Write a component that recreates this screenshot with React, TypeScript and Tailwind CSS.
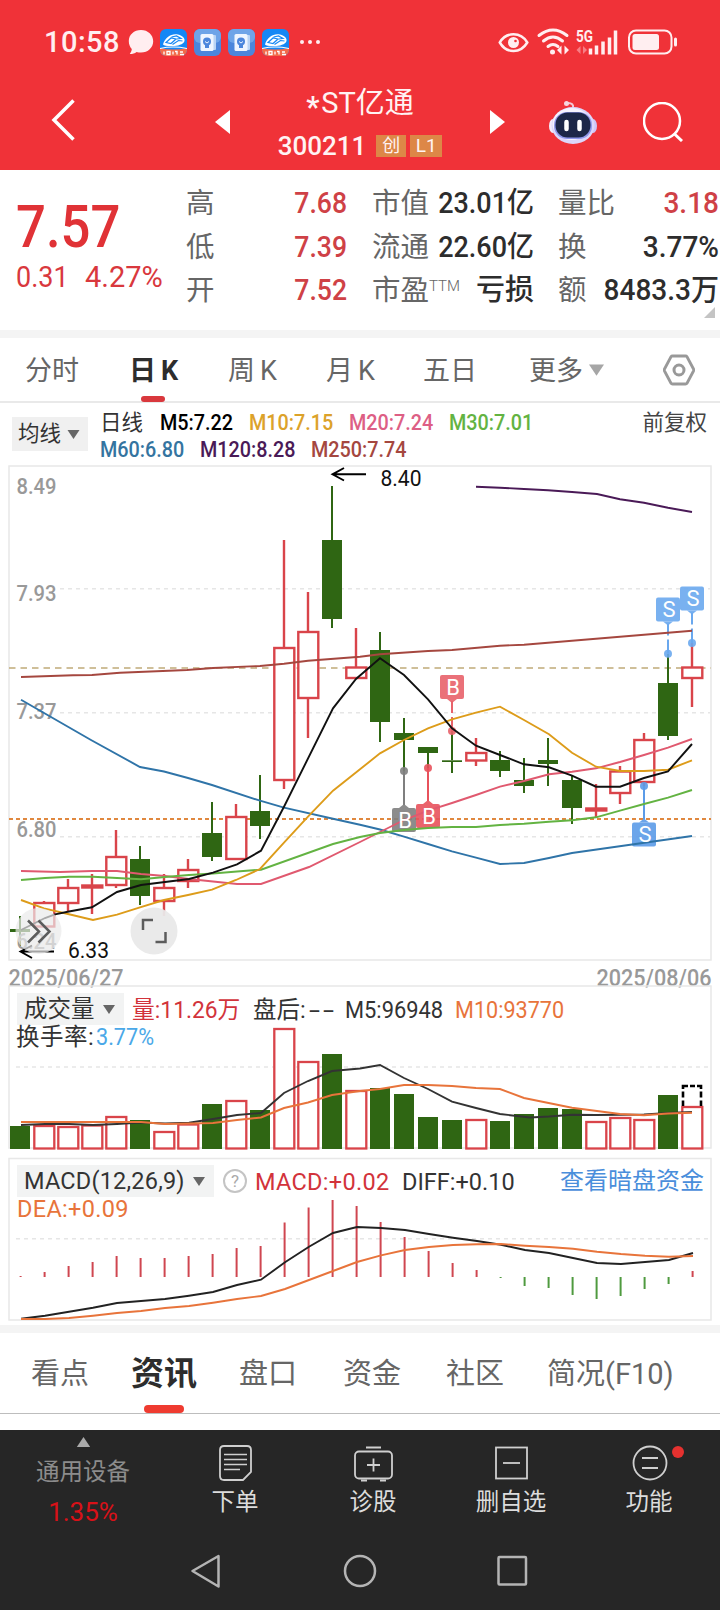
import React from 'react'
import clsx from 'clsx'

const RED = '#d9444a'
const GREEN = '#2f6613'

// high, body top, body bottom, low
type Candle = { up: boolean; y: [number, number, number, number]; vol: number }

const CANDLES: Candle[] = [
  { up: false, y: [916, 929, 932, 946], vol: 1126 },
  { up: true, y: [901, 903, 926.5, 926.5], vol: 1126 },
  { up: true, y: [879, 888, 903, 911], vol: 1127 },
  { up: true, y: [874, 885.5, 887.5, 914], vol: 1125.5 },
  { up: true, y: [830, 857, 885, 888], vol: 1117 },
  { up: false, y: [846, 859, 896, 905], vol: 1120 },
  { up: true, y: [874, 888, 901, 916], vol: 1132 },
  { up: true, y: [859, 870, 881, 888], vol: 1124.5 },
  { up: false, y: [802, 833, 857, 861], vol: 1104 },
  { up: true, y: [804, 817, 859, 859], vol: 1101 },
  { up: false, y: [775, 811, 826, 839], vol: 1110 },
  { up: true, y: [540, 648, 780, 789], vol: 1029 },
  { up: true, y: [592, 632, 698, 738], vol: 1062 },
  { up: false, y: [486, 540, 619, 628], vol: 1054 },
  { up: true, y: [628, 667.5, 678, 678], vol: 1091 },
  { up: false, y: [632, 650, 722, 742], vol: 1088 },
  { up: false, y: [718, 733, 740, 771], vol: 1094 },
  { up: false, y: [747, 747, 753, 768], vol: 1117 },
  { up: false, y: [731, 760.3, 762, 773], vol: 1120 },
  { up: true, y: [738, 753, 760.5, 766], vol: 1120 },
  { up: false, y: [751, 760, 771, 777], vol: 1121 },
  { up: false, y: [758, 780, 786, 793], vol: 1114 },
  { up: false, y: [738, 760, 764, 786], vol: 1108 },
  { up: false, y: [776, 780, 808, 824], vol: 1109 },
  { up: true, y: [784, 808.5, 810.5, 817], vol: 1122 },
  { up: true, y: [766, 771.5, 793, 804], vol: 1118 },
  { up: true, y: [733, 740, 782, 786], vol: 1120 },
  { up: false, y: [654, 683, 736, 740], vol: 1095 },
  { up: true, y: [643, 667.5, 678, 707], vol: 1107 },
]

const MA_LINES: { color: string; points: string }[] = [
  { color: '#a5473f', points: '21,677 73,675.3 92,675 120,672.8 187,670 213,668 260,666 284,663.7 308,660.7 360,656.7 380,654.3 428,651 452,650 500,645.7 524,644.7 692,630.7' },
  { color: '#4a1a57', points: '476,486.7 500,487.7 524,489 548,490.3 572,492 597,494 620,499.3 644,502.7 668,507.7 692,512' },
  { color: '#2f74a8', points: '21,699.7 91,740 140,767 164,771.5 188,778 212,785 260,800.7 284,807.7 333,818.7 360,824.7 380,829.5 404,836.7 428,844 452,851.3 476,857.7 500,864 524,863 549,858 572,853 692,836' },
  { color: '#e0596f', points: '21,871 60,872 92,871 117,871 141,874 165,876 189,879 213,881.5 237,884 261,884 309,867 360,842 380,832 404,820 428,810.7 452,803 476,795 500,786.7 524,781 549,774.3 572,771.7 596,768.3 620,762 644,755 668,747.7 692,739' },
  { color: '#63b342', points: '21,880 45,878 69,876.7 93,876.7 117,878 141,879.3 165,877 189,875 213,873.5 237,871.5 261,869.7 333,844 360,837 380,833 404,830 428,828 452,827 476,827 500,825 524,823.7 549,821.7 572,820.3 596,817.3 620,810.7 644,804 668,797.7 692,790' },
  { color: '#dd9c1a', points: '21,900 44,908.3 68,914 93,920 117,914.7 140,907.3 164,900 188,895 212,889.7 236,880 260,869 284,842.7 308,816.7 333,790.7 360,769.3 380,753.3 404,740 428,728.3 452,719.3 476,712.7 500,706.7 524,720 549,734.3 572,752.7 596,766.7 620,771 644,771 668,769.7 692,760.3' },
  { color: '#111111', points: '21,930 45,918 55,914.3 69,911.5 92,907.3 117,892 141,885 165,882 189,879 213,872.7 237,864.3 261,850.7 284,806.7 333,708.3 356,679 380,658.3 404,675 428,699.3 452,728.3 476,745.7 500,755 524,764.3 549,767.3 572,775.7 596,786.7 620,786.7 644,778 668,771.3 692,744' },
]

const MACD_BARS = [-1, -5, -11, -15, -21, -19, -19, -21, -23, -29, -31, -54.5, -69.5, -77, -71, -55, -40, -26, -14, -7, 1, 9, 11, 18, 22, 19, 12, 7, -6]
const DIFF = [1318.7, 1315.7, 1311.7, 1307.7, 1303, 1301, 1299, 1295.7, 1292, 1285, 1279.7, 1262.3, 1246.7, 1233, 1227, 1228, 1230, 1234, 1237.7, 1241, 1244.7, 1250, 1253, 1258, 1263, 1264, 1262, 1260, 1253]
const DEA = [1319, 1319, 1318, 1315.7, 1313, 1311, 1308, 1306, 1302.7, 1299, 1296, 1289, 1280, 1271, 1262, 1255.3, 1250, 1247, 1245, 1244.3, 1244, 1245.7, 1247, 1248.7, 1251.7, 1254, 1255.7, 1256.7, 1256]

const cx = (i: number) => 20 + i * 24
const toPoints = (ys: number[]) => ys.map((y, i) => `${cx(i) + 1},${y}`).join(' ')

const AXIS = [
  { label: '8.49', y: 494 },
  { label: '7.93', y: 600.7 },
  { label: '7.37', y: 718.7 },
  { label: '6.80', y: 836.7 },
  { label: '6.24', y: 948.7 },
]

// dir = 1: the flag hangs below the dot, dir = -1: it stands above
const MARKERS = [
  { x: 404, dot: 771, box: 808, dir: 1, text: 'B', fill: '#7f7f7f' },
  { x: 428, dot: 768, box: 804, dir: 1, text: 'B', fill: '#e8525c' },
  { x: 644, dot: 786, box: 822.5, dir: 1, text: 'S', fill: '#5b9be8' },
  { x: 452, dot: 731, box: 675, dir: -1, text: 'B', fill: '#e8626a' },
  { x: 668, dot: 653.7, box: 597.5, dir: -1, text: 'S', fill: '#6aa8ee' },
  { x: 692, dot: 643, box: 586.5, dir: -1, text: 'S', fill: '#6aa8ee' },
]

const Caret: React.FC<{ className?: string }> = ({ className }) => (
  <svg viewBox="0 0 12 9" className={className}>
    <path d="M0 0h12L6 9z" fill="currentColor" />
  </svg>
)

const TrainIcon = () => (
  <svg viewBox="0 0 27 27" className="size-[27px]">
    <rect width="27" height="27" rx="6" fill="#1587f5" />
    <path d="M0 19q13 3 27 0v2a6 6 0 0 1-6 6H6a6 6 0 0 1-6-6z" fill="#f26a4a" />
    <path d="M0 19.500q13-3 27 0" stroke="#fff" strokeWidth="1.2" fill="none" />
    <path d="M3 15.500C5 8 12 4 18 5.500c5 1.200 7 4 6.500 6.500-1 4-9 5.500-14 5-3.500 0-6.500 0-7.500-1.500z" fill="#fff" />
    <path d="M6 13.500l5-4.500 5 1-5 4.500zM11.500 8l5-1 4.500 2.500-4 .5M12.500 15.500l6-4 4 .5" stroke="#1587f5" strokeWidth="1.200" fill="none" />
    <path d="M4 22.500v3M7 22.500h3v3H7zM13 22.500v3M15 22.500h2v3M20 23h3M20 25.500h4" stroke="#fff" strokeWidth="1.300" fill="none" />
  </svg>
)

const CardIcon = () => (
  <svg viewBox="0 0 27 27" className="size-[27px]">
    <rect width="27" height="27" rx="6" fill="#4b86dc" />
    <rect width="27" height="14" rx="6" fill="#6ea4e8" />
    <rect x="17" y="6" width="5" height="15" rx="1" fill="#b9d4f5" />
    <rect x="6.500" y="5" width="13" height="17" rx="1.500" fill="#eef5ff" />
    <circle cx="13" cy="12.500" r="4" fill="#4b86dc" />
    <path d="M11 15.500h4v3.500h-4z" fill="#4b86dc" />
    <path d="M11 12.500l2 1.500 2-1.500" stroke="#eef5ff" fill="none" />
  </svg>
)

const StatusBar = () => (
  <div className="flex h-[74px] items-center pt-[10px] pl-[44px] text-[#ffeef0]">
    <span className="w-[84px] text-[29px] leading-7 font-medium tracking-[0.500px]">10:58</span>
    <svg viewBox="0 0 26 26" className="mr-[6px] size-[26px]">
      <path d="M13 1C6 1 .8 5.700.8 12c0 3.600 1.200 6 3 8-.2 2-1 3.500-2 5 3 0 5-.6 6.700-2 1.500.4 3 .5 4.500.5 7 0 12.200-5 12.200-11.300S20 1 13 1z" fill="currentColor" />
    </svg>
    <div className="flex gap-[7px]">
      <TrainIcon />
      <CardIcon />
      <CardIcon />
      <TrainIcon />
    </div>
    <div className="ml-[11px] flex w-[199px] gap-1">
      <i className="size-1 rounded-full bg-current" />
      <i className="size-1 rounded-full bg-current" />
      <i className="size-1 rounded-full bg-current" />
    </div>
    <svg viewBox="0 0 180 28" className="-ml-px h-[28px] w-[180px] overflow-visible" fill="none" stroke="currentColor">
      <path d="M1.800 14.500C5 9 10 6.300 15.500 6.300S26 9 29.300 14.500C26 20 21 23 15.500 23S5 20 1.800 14.500z" strokeWidth="2.500" />
      <circle cx="15.500" cy="14.500" r="5.500" fill="currentColor" stroke="none" />
      <circle cx="17.500" cy="13" r="1.300" fill="#f03238" stroke="none" />
      <g strokeWidth="3" strokeLinecap="round">
        <path d="M41 7.500q14-11 28 0" />
        <path d="M45.500 13q9.500-8 19 0" />
        <path d="M50 18.500q5-4 10 0" />
      </g>
      <circle cx="54.500" cy="24" r="2.500" fill="currentColor" stroke="none" />
      <path d="M63.500 17.500v9l-4.500-4.500zM66.500 17.500v9l4.500-4.500z" fill="currentColor" stroke="none" />
      <text x="78" y="13.500" fontSize="16" fontWeight="700" fill="currentColor" stroke="none" textLength="17" lengthAdjust="spacingAndGlyphs">5G</text>
      <path d="M82.500 18v8l-4-4zM85 18v8l4-4z" fill="#f77f85" stroke="none" />
      <path d="M92.500 26.500v-6M98.500 26.500v-9M105 26.500v-13M111.500 26.500v-17M117.500 26.500v-24" strokeWidth="3.500" strokeLinecap="butt" />
      <rect x="131" y="2.500" width="42.500" height="23" rx="7" strokeWidth="2" />
      <rect x="134.500" y="6" width="26.500" height="16" rx="2.500" fill="currentColor" stroke="none" />
      <path d="M177.500 11v6" strokeWidth="3" strokeLinecap="round" />
    </svg>
  </div>
)

const Robot = () => (
  <svg viewBox="0 0 48 44" className="ml-[44px] h-[44px] w-[48px]">
    <path d="M24 8q1-5-5-5" stroke="#f3c8d4" strokeWidth="2" fill="none" />
    <circle cx="17.500" cy="3.500" r="2.500" fill="#f6d5de" />
    <ellipse cx="4" cy="26" rx="4" ry="7" fill="#f4ecfb" />
    <ellipse cx="44" cy="26" rx="4" ry="7" fill="#cfc4f6" />
    <ellipse cx="24" cy="25.500" rx="21.500" ry="18.500" fill="#dcd6fa" />
    <ellipse cx="22.500" cy="24" rx="19" ry="16" fill="#f7f3fd" />
    <rect x="5" y="12" width="38" height="27" rx="13" fill="#8f97ea" />
    <rect x="6.500" y="12.500" width="35" height="25" rx="12" fill="#1d2747" />
    <path d="M17.500 22v7M30.500 22v7" stroke="#fff" strokeWidth="4.500" strokeLinecap="round" />
  </svg>
)

const NavBar = () => (
  <div className="flex h-[96px] items-center pl-[51px] text-white">
    <svg viewBox="0 0 24 42" className="mb-1 h-[42px] w-[24px]" fill="none" stroke="currentColor" strokeWidth="3.500">
      <path d="M22.500 1.500L3 21l19.500 19.500" />
    </svg>
    <svg viewBox="0 0 15 24" className="ml-[140px] h-[24px] w-[15px]"><path d="M15 0v24L0 12z" fill="currentColor" /></svg>
    <div className="flex w-[260px] flex-col items-center pt-[6px]">
      <div className="-mt-px mb-px text-[29px] leading-[42px] text-[#fff3f3]">
        <span className="mr-0.5 inline-block translate-y-[4px] font-bold">*</span>ST亿通
      </div>
      <div className="flex items-center gap-1 leading-[42px] text-[#fff3f3]">
        <span className="mr-[6px] text-[26px] font-medium">300211</span>
        <span className="flex h-[22px] w-[30px] items-center justify-center bg-[#dd8747] text-[18px]">创</span>
        <span className="flex h-[22px] w-[32px] items-center justify-center bg-[#dd8747] text-[19px]">L1</span>
      </div>
    </div>
    <svg viewBox="0 0 15 24" className="h-[24px] w-[15px]"><path d="M0 0v24l15-12z" fill="currentColor" /></svg>
    <Robot />
    <svg viewBox="0 0 40 40" className="ml-[46px] size-[40px]" fill="none" stroke="currentColor" strokeWidth="2.500">
      <circle cx="19" cy="19" r="18" />
      <path d="M31 31.500l8 7.500" strokeWidth="3" />
    </svg>
  </div>
)

const QUOTE_ROWS = [
  { a: ['高', '7.68'], b: ['市值', '23.01亿'], c: ['量比', '3.18'], red: true },
  { a: ['低', '7.39'], b: ['流通', '22.60亿'], c: ['换', '3.77%'] },
  { a: ['开', '7.52'], b: ['市盈', '亏损'], c: ['额', '8483.3万'], ttm: true },
]

const Quote = () => (
  <div className="relative flex h-[168px] border-b-8 border-[#f4f4f4] text-[28.500px]">
    <div className="w-[186px] pt-[24px] pl-[16px] text-[#d9383d]">
      <div className="w-[113px] origin-left scale-x-90 text-[58.500px] leading-[66px] font-medium text-[#e03236]">7.57</div>
      <div className="flex text-[29px] leading-[35px]">
        <span className="w-[69px] origin-left scale-x-[0.93]">0.31</span>
        <span className="origin-left">4.27%</span>
      </div>
    </div>
    <div className="flex-1 pt-[12px]">
      {QUOTE_ROWS.map((row) => (
        <div key={row.a[0]} className="flex h-[43.500px] items-baseline leading-[43px] text-[#666]">
          <span className="w-[60px]">{row.a[0]}</span>
          <span className="w-[101px] origin-right scale-x-90 text-right text-[29.500px] font-medium text-[#cf4146]">{row.a[1]}</span>
          <span className="ml-[25px]">{row.b[0]}</span>
          <span className="w-0 -translate-y-[9px] text-[15px] font-light">{row.ttm && 'TTM'}</span>
          <span className={clsx('w-[105px] origin-right text-right text-[29px] font-medium text-[#2d2d2d]', !row.ttm && 'scale-x-[0.93]')}>{row.b[1]}</span>
          <span className="ml-[24px] w-[58px]">{row.c[0]}</span>
          <span className={clsx('flex w-[103px] origin-right scale-x-[0.95] justify-end text-[29.500px] font-medium whitespace-nowrap', row.red ? 'text-[#cf4146]' : 'text-[#2d2d2d]')}>{row.c[1]}</span>
        </div>
      ))}
    </div>
    <svg viewBox="0 0 11 11" className="absolute right-[5px] bottom-[12px] size-[11px]"><path d="M11 0v11H0z" fill="#c4c4c4" /></svg>
  </div>
)

const PERIODS = [
  { label: '分时', cls: 'ml-[25px] w-[104px]' },
  { label: '日K', cls: 'w-[99px] font-bold text-[#2d2d2d] tracking-[5px]', active: true },
  { label: '周K', cls: 'w-[98px] tracking-[5px]' },
  { label: '月K', cls: 'w-[97px] tracking-[5px]' },
  { label: '五日', cls: 'w-[106px]' },
  { label: '更多', cls: 'w-[60px]' },
]

const PeriodTabs = () => (
  <div className="flex h-[65px] items-center border-b-2 border-[#e9e9e9] text-[27px] text-[#666]">
    {PERIODS.map((p) => (
      <div key={p.label} className={clsx('relative h-full leading-[67px]', p.cls)}>
        {p.label}
        {p.active && <i className="absolute -bottom-px left-[12px] h-[6px] w-[24px] rounded-full bg-[#d9383d]" />}
      </div>
    ))}
    <Caret className="h-[12px] w-[15px] text-[#a6a6a6]" />
    <svg viewBox="0 0 32 32" className="ml-[59px] size-[32px]" fill="none" stroke="#999" strokeWidth="2.800">
      <path d="M9.500 2h13q1 0 1.500.8L30.500 15q.5 1 0 2L24 29.200q-.5.8-1.500.8h-13q-1 0-1.500-.8L1.500 17q-.5-1 0-2L8 2.800Q8.500 2 9.500 2z" />
      <circle cx="16" cy="16" r="5" strokeWidth="3" />
    </svg>
  </div>
)

const MaLegend = () => (
  <div className="flex h-[60px] text-[22px]">
    <div className="mt-[14px] ml-[12px] flex h-[34px] w-[76px] items-center bg-[#f0f0f0] pl-[6px] text-[21.500px] text-[#333]">
      均线
      <Caret className="ml-[6px] h-[9px] w-[13px] text-[#666]" />
    </div>
    <div className="ml-[12px] flex-1 pt-[6px] leading-[27px]">
      <div className="flex">
        <span className="w-[60px] text-[21.500px] text-[#333]">日线</span>
        <span className="w-[89px] origin-left scale-x-90 font-medium text-black">M5:7.22</span>
        <span className="w-[100px] origin-left scale-x-90 font-medium text-[#dca22a]">M10:7.15</span>
        <span className="w-[100px] origin-left scale-x-90 font-medium text-[#dd5f85]">M20:7.24</span>
        <span className="origin-left scale-x-90 font-medium text-[#63b342]">M30:7.01</span>
      </div>
      <div className="flex">
        <span className="w-[100px] origin-left scale-x-90 font-medium text-[#3474a0]">M60:6.80</span>
        <span className="w-[111px] origin-left scale-x-90 font-medium text-[#4a1a57]">M120:8.28</span>
        <span className="origin-left scale-x-90 font-medium text-[#a5473f]">M250:7.74</span>
      </div>
    </div>
    <span className="mr-[13px] pt-[6px] text-[21.500px] leading-[28px] text-[#444]">前复权</span>
  </div>
)

const KChart = () => (
  <svg viewBox="0 463 720 523" className="block h-[523px] w-[720px] overflow-visible">
    <path d="M9 466H711V960H9z" fill="none" stroke="#e8e8e8" strokeWidth="1.500" />
    <path d="M60 588.700H710M60 712.700H710M60 836.700H710" stroke="#e6e6e6" strokeWidth="1.500" strokeDasharray="4 4" />
    <path d="M9 668H711" stroke="#c0ab78" strokeWidth="1.700" strokeDasharray="6.500 5" />
    <path d="M9 819H711" stroke="#e0883f" strokeWidth="2" strokeDasharray="4 3" />
    {CANDLES.map(({ up, y: [h, t, b, l] }, i) => (
      <g key={i} stroke={up ? RED : GREEN} strokeWidth={up ? 2.4 : 2}>
        <path d={`M${cx(i)} ${h}V${t}M${cx(i)} ${b}V${l}`} />
        {up ? (
          <rect x={cx(i) - 9.700} y={t} width="20" height={b - t} fill="#fff" />
        ) : (
          <rect x={cx(i) - 10} y={t} width="20" height={b - t} fill={GREEN} stroke="none" />
        )}
      </g>
    ))}
    {MARKERS.map((m) => (
      <g key={m.x} fill={m.fill} fillOpacity="0.9">
        <path
          d={m.dir > 0 ? `M${m.x} ${m.dot}V${m.box - 3}` : `M${m.x} ${m.box + 26}v12m0 4V${m.dot}`}
          stroke={m.fill}
          strokeWidth="2"
        />
        <circle cx={m.x} cy={m.dot} r="4" />
        <rect x={m.x - 12} y={m.box} width="24" height="24" rx="2" />
        <path d={m.dir > 0 ? `M${m.x - 5} ${m.box}l5-4 5 4z` : `M${m.x - 5} ${m.box + 24}l5 4 5-4z`} />
      </g>
    ))}
    {AXIS.map((a) => (
      <text key={a.label} x="16.500" y={a.y} fontSize="22" fontWeight="500" fill="#999" textLength="40" lengthAdjust="spacingAndGlyphs">{a.label}</text>
    ))}
    {MA_LINES.map((l) => (
      <polyline key={l.color} points={l.points} fill="none" stroke={l.color} strokeWidth="1.900" />
    ))}
    {MARKERS.map((m) => (
      <text key={m.x} x={m.x + 1} y={m.box + 19.500} fontSize="22" fill="#fff" textAnchor="middle">{m.text}</text>
    ))}
    <g stroke="#000" strokeWidth="1.900" fill="none">
      <path d="M366 474.300H333M344 468l-11.500 6.300L344 480.500" />
      <path d="M54 951.500H20.500M32 945.500l-11.500 6L32 958" />
    </g>
    <g fontSize="22" fill="#111">
      <text x="380.500" y="485.700" textLength="41" lengthAdjust="spacingAndGlyphs">8.40</text>
      <text x="68" y="957.500" textLength="41" lengthAdjust="spacingAndGlyphs">6.33</text>
    </g>
    <g fill="#e9e9e9" fillOpacity="0.7">
      <circle cx="38.500" cy="931" r="23" />
      <circle cx="154" cy="931" r="23.500" fillOpacity="0.95" />
    </g>
    <g fill="none" stroke="#5c5c5c" strokeWidth="2.500">
      <path d="M28 920.500l11 11-11 11M38.500 920.500l11 11-11 11" />
      <path d="M143 930v-10h10M155.500 942h10v-10" />
    </g>
    <g fontSize="23" fontWeight="500" fill="#999">
      <text x="8.500" y="985.500" textLength="115" lengthAdjust="spacingAndGlyphs">2025/06/27</text>
      <text x="596.500" y="985.500" textLength="115" lengthAdjust="spacingAndGlyphs">2025/08/06</text>
    </g>
  </svg>
)

const VolumeChart = () => (
  <div className="relative h-[170px] text-[23.500px] leading-[28px]">
    <svg viewBox="0 985 720 170" className="block h-[170px] w-[720px]">
      <path d="M9 986H711V1148H9z" fill="none" stroke="#e8e8e8" strokeWidth="1.500" />
      <path d="M16 1067H710" stroke="#e6e6e6" strokeWidth="1.500" strokeDasharray="4 4" />
      {CANDLES.map(({ up, vol }, i) =>
        up ? (
          <rect key={i} x={cx(i) - 9.700} y={vol} width="20" height={1148.500 - vol} fill="#fff" stroke={RED} strokeWidth="2.300" />
        ) : (
          <rect key={i} x={cx(i) - 10} y={vol} width="20" height={1149 - vol} fill={GREEN} />
        ),
      )}
      <path d="M683 1106V1100.500M683 1097.500V1091.500M683 1089V1086H688M690 1086h5M697 1086H701V1089M701 1091.500v6M701 1100.500v5.500" fill="none" stroke="#000" strokeWidth="2.600" />
      <polyline
        points="21,1125 45,1124 69,1124 93,1125 117,1124 141,1122.500 165,1123.500 189,1122.700 213,1119 237,1115 261,1113 284,1093 308,1081 332,1071 360,1068.500 380,1065 404,1078 428,1089 452,1101.700 476,1108 500,1114 530,1117.500 549,1116.500 572,1114.700 596,1115 644,1114.500 668,1113 692,1112"
        fill="none" stroke="#333" strokeWidth="1.900"
      />
      <polyline
        points="21,1122 141,1122 165,1124 213,1123 237,1120 261,1117.500 284,1108 308,1102.500 332,1095 360,1091 380,1089 404,1085 428,1085 452,1086 476,1088 500,1089 524,1098 572,1107.700 620,1114 644,1115.300 668,1113.500 692,1112.700"
        fill="none" stroke="#e8743b" strokeWidth="1.900"
      />
    </svg>
    <div className="absolute top-[8px] left-[17px] text-[#333]">
      <div className="flex items-center">
        <span className="flex h-[32px] w-[107px] items-center bg-[#f2f3f3] pl-[7px]">
          成交量
          <Caret className="ml-[8px] h-[9px] w-[12px] text-[#666]" />
        </span>
        <span className="ml-[8px] w-[121px] origin-left scale-x-[0.97] pt-px text-[#d2333b]">量:11.26万</span>
        <span className="flex w-[92px] pt-px">
          盘后:
          <span className="ml-[3px] w-[14px] origin-left scale-x-[1.700]">-</span>
          <span className="origin-left scale-x-[1.700]">-</span>
        </span>
        <span className="w-[110px] origin-left scale-x-[0.93] pt-px">M5:96948</span>
        <span className="origin-left scale-x-[0.92] pt-px text-[#e8743b]">M10:93770</span>
      </div>
      <div className="-mt-[2px] flex">
        <span className="-ml-px w-[80px] tracking-[0.500px]">换手率:</span>
        <span className="origin-left scale-x-[0.92] text-[#4aa8e8]">3.77%</span>
      </div>
    </div>
  </div>
)

const MacdChart = () => (
  <div className="relative h-[178px] border-b-8 border-[#f4f4f4] text-[23.500px] leading-[28px]">
    <svg viewBox="0 1155 720 170" className="block h-[170px] w-[720px]">
      <path d="M9 1158.500H711V1320H9z" fill="none" stroke="#e8e8e8" strokeWidth="1.500" />
      <path d="M16 1238.700H710" stroke="#e6e6e6" strokeWidth="1.500" strokeDasharray="4 4" />
      {MACD_BARS.map((v, i) => (
        <path key={i} d={`M${cx(i) + 0.600} 1277v${v}`} stroke={v < 0 ? '#cf4650' : '#4f9a3f'} strokeWidth="2" />
      ))}
      <polyline points={toPoints(DIFF)} fill="none" stroke="#222" strokeWidth="1.900" />
      <polyline points={toPoints(DEA)} fill="none" stroke="#e8743b" strokeWidth="1.900" />
    </svg>
    <div className="absolute top-[10px] left-[17px] w-[687px] text-[#333]">
      <div className="flex items-center">
        <span className="flex h-[32px] w-[197px] items-center bg-[#f2f3f3] pl-[7px] tracking-[0.200px]">
          MACD(12,26,9)
          <Caret className="mr-[9px] ml-auto h-[9px] w-[12px] text-[#666]" />
        </span>
        <span className="ml-[9px] flex size-[24px] items-center justify-center rounded-full border-2 border-[#c4c4c4] text-[17px] text-[#aaa]">?</span>
        <span className="ml-[8px] w-[147px] pt-px tracking-[0.300px] text-[#d2333b]">MACD:+0.02</span>
        <span className="pt-px">DIFF:+0.10</span>
        <span className="ml-auto text-[24px] text-[#4a8edb]">查看暗盘资金</span>
      </div>
      <div className="-mt-[2px] tracking-[0.300px] text-[#e8743b]">DEA:+0.09</div>
    </div>
  </div>
)

const INFO_TABS = [
  { label: '看点', cls: 'ml-[31px] w-[100px]' },
  { label: '资讯', cls: 'w-[108px] text-[33px] font-bold text-[#2d2d2d]', active: true },
  { label: '盘口', cls: 'w-[104px]' },
  { label: '资金', cls: 'w-[103px]' },
  { label: '社区', cls: 'w-[101px]' },
  { label: '简况(F10)', cls: 'w-[140px]' },
]

const InfoTabs = () => (
  <div className="flex h-[81px] border-b border-[#bdbdbd] text-[29px] leading-[82px] text-[#666]">
    {INFO_TABS.map((t) => (
      <div key={t.label} className={clsx('relative whitespace-nowrap', t.cls)}>
        {t.label}
        {t.active && <i className="absolute top-[72px] left-[13px] h-2 w-[40px] rounded-full bg-[#ef3b30]" />}
      </div>
    ))}
  </div>
)

const ACTIONS = [
  {
    label: '下单',
    icon: (
      <>
        <path d="M8 1h23q4 0 4 4v22l-8 8H8q-4 0-4-4V5q0-4 4-4z" />
        <path d="M8 9.500h23M8 14.500h23M8 19.500h23M8 24.500h16" strokeWidth="1.600" />
      </>
    ),
  },
  {
    label: '诊股',
    icon: (
      <>
        <rect x="1" y="6.500" width="37" height="27" rx="4" />
        <path d="M12 2.500h15M7 35.500h6M26 35.500h6M19.500 13.500v13M13 20h13" />
      </>
    ),
  },
  {
    label: '删自选',
    icon: (
      <>
        <rect x="4" y="2.500" width="31" height="31" />
        <path d="M11 18h17" />
      </>
    ),
  },
  {
    label: '功能',
    dot: true,
    icon: (
      <>
        <circle cx="20" cy="18" r="16.500" />
        <path d="M12 13h16M12 23h16" />
      </>
    ),
  },
]

const BottomBar = () => (
  <div className="h-[180px] bg-[#262626]">
    <div className="flex h-[110px]">
      <div className="flex w-[166px] flex-col items-center pt-[7px] text-[23.500px] text-[#8c8c8c]">
        <Caret className="h-[10px] w-[17px] rotate-180 text-[#aaa]" />
        <span className="mt-[7px] leading-[36px]">通用设备</span>
        <span className="mt-[4px] text-[26px] leading-[36px] text-[#d81118]">1.35%</span>
      </div>
      {ACTIONS.map((a) => (
        <div key={a.label} className="relative flex w-[138px] flex-col items-center pt-[15px] text-[23.500px] text-[#dcdcdc]">
          <svg viewBox="0 0 39 38" className="h-[38px] w-[39px]" fill="none" stroke="#cfcfcf" strokeWidth="1.800">{a.icon}</svg>
          <span className="mt-px leading-[36px]">{a.label}</span>
          {a.dot && <i className="absolute top-[16px] left-[92px] size-3 rounded-full bg-[#e5312f]" />}
        </div>
      ))}
    </div>
    <div className="flex h-[62px] items-center pl-[190px]">
      <svg viewBox="0 0 340 36" className="h-[36px] w-[340px]" fill="none" stroke="#b4b4b4" strokeWidth="2.500" strokeLinejoin="round">
        <path d="M28.500 3v30.500L2.500 18z" />
        <circle cx="170" cy="18" r="15" />
        <rect x="308.500" y="4" width="27.500" height="27.500" rx="1" />
      </svg>
    </div>
  </div>
)

export default function App() {
  return (
    <div className="relative h-[1610px] w-[720px] overflow-hidden bg-white font-[Roboto,'Noto_Sans_CJK_SC',sans-serif]">
      <header className="bg-[#f03238]">
        <StatusBar />
        <NavBar />
      </header>
      <Quote />
      <PeriodTabs />
      <MaLegend />
      <KChart />
      <div className="-mt-px">
        <VolumeChart />
        <MacdChart />
      </div>
      <InfoTabs />
      <div className="h-4" />
      <BottomBar />
    </div>
  )
}
